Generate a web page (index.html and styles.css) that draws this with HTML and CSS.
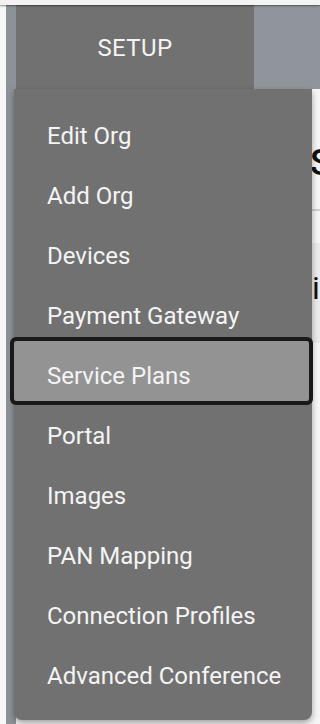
FILE: index.html
```html
<!DOCTYPE html>
<html>
<head>
<meta charset="utf-8">
<link rel="stylesheet" href="styles.css">
</head>
<body>
<div class="topbar"></div>
<div class="page">
  <div class="gutter"></div>
  <div class="rail"></div>
  <div class="main">
    <nav class="nav">
      <div class="tab">SETUP</div>
      <div class="nav-rest"></div>
    </nav>
    <div class="content">
      <div class="heading">Service Plans</div>
      <div class="rule"></div>
      <div class="band">i d</div>
    </div>
  </div>
  <ul class="menu">
    <li class="item">Edit Org</li>
    <li class="item">Add Org</li>
    <li class="item">Devices</li>
    <li class="item">Payment Gateway</li>
    <li class="item active">Service Plans</li>
    <li class="item">Portal</li>
    <li class="item">Images</li>
    <li class="item">PAN Mapping</li>
    <li class="item">Connection Profiles</li>
    <li class="item">Advanced Conference</li>
  </ul>
</div>
</body>
</html>
```

FILE: styles.css
```css
html, body {
  margin: 0;
  padding: 0;
  background: #fafafa;
  font-family: Roboto, "Liberation Sans", sans-serif;
  overflow: hidden;
}
.topbar {
  height: 5px;
  background: #f3f3f3;
  position: relative;
  z-index: 2;
  box-shadow: 0 1px 2px rgba(0,0,0,0.45);
}
.page {
  position: relative;
  display: flex;
  height: 719px;
}
.gutter {
  width: 6px;
  background: #f7f7f7;
  flex: none;
}
.rail {
  width: 10px;
  background: #8d9298;
  flex: none;
}
.main {
  flex: 1;
  display: flex;
  flex-direction: column;
  min-width: 0;
  overflow: hidden;
}
.nav {
  display: flex;
  height: 84px;
  background: #8f959a;
  flex: none;
}
.tab {
  width: 238px;
  background: #717171;
  color: #f4f4f4;
  font-size: 24px;
  letter-spacing: 0.4px;
  display: flex;
  align-items: center;
  justify-content: center;
  padding-top: 2px;
  box-sizing: border-box;
}
.nav-rest {
  flex: 1;
}
.content {
  flex: 1;
  background: #f6f6f6;
  display: flex;
  flex-direction: column;
  padding-left: 294px;
  white-space: nowrap;
  overflow: hidden;
}
.heading {
  margin-top: 54px;
  font-size: 36px;
  font-weight: 500;
  color: #111;
  height: 66px;
  line-height: 40px;
}
.rule {
  height: 2px;
  background: #cfcfcf;
}
.band {
  margin-top: 32px;
  background: #ebebeb;
  height: 100px;
  font-size: 32px;
  color: #111;
  padding-top: 26px;
  padding-left: 2px;
  box-sizing: border-box;
}
.menu {
  position: absolute;
  left: 14px;
  top: 84px;
  width: 298px;
  height: 631px;
  box-sizing: border-box;
  margin: 0;
  padding: 12px 0 15px 0;
  list-style: none;
  background: #717171;
  border-radius: 0 0 8px 8px;
  box-shadow: 0 3px 6px rgba(0,0,0,0.35);
  z-index: 3;
}
.item {
  height: 60px;
  box-sizing: border-box;
  padding-left: 33px;
  padding-top: 9px;
  display: flex;
  align-items: center;
  font-size: 24px;
  color: #f4f4f4;
}
.item.active {
  background: #939393;
  margin-right: 3px;
  outline: 4px solid #191919;
  border-radius: 2px;
}
```
